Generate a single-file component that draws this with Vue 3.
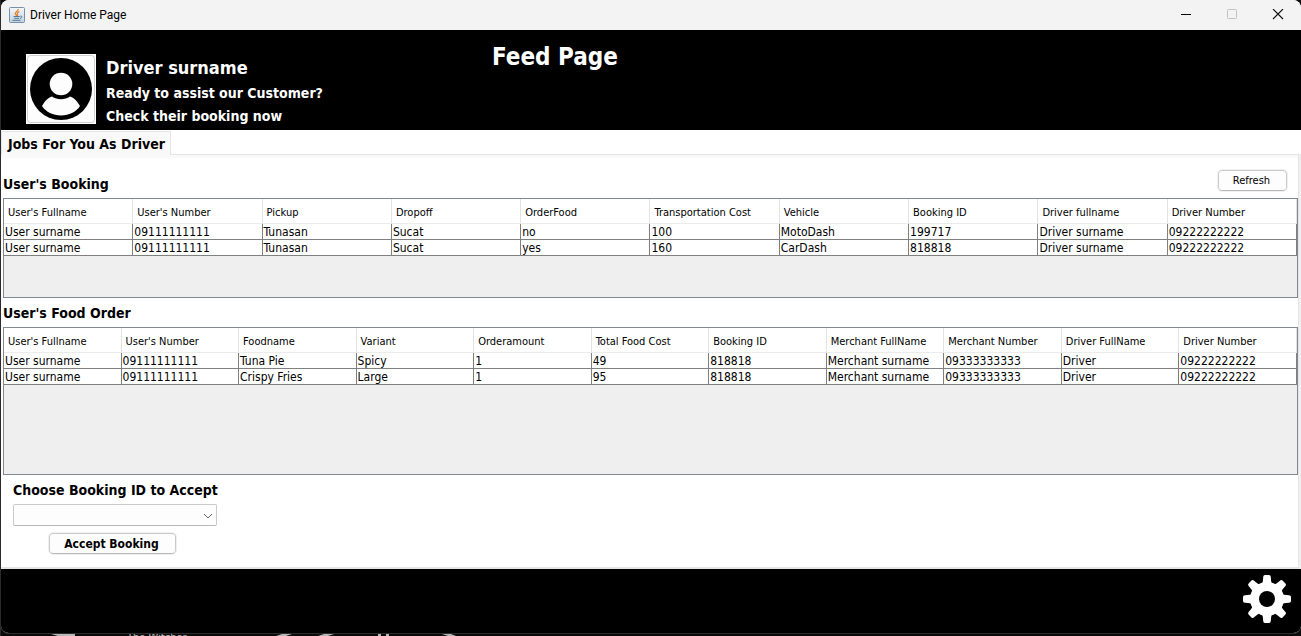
<script setup>
import { ref } from 'vue'

const selectedBooking = ref('')

const bookingColumns = [
  "User's Fullname", "User's Number", 'Pickup', 'Dropoff', 'OrderFood',
  'Transportation Cost', 'Vehicle', 'Booking ID', 'Driver fullname', 'Driver Number',
]
const bookings = [
  ['User surname', '09111111111', 'Tunasan', 'Sucat', 'no', '100', 'MotoDash', '199717', 'Driver surname', '09222222222'],
  ['User surname', '09111111111', 'Tunasan', 'Sucat', 'yes', '160', 'CarDash', '818818', 'Driver surname', '09222222222'],
]

const orderColumns = [
  "User's Fullname", "User's Number", 'Foodname', 'Variant', 'Orderamount', 'Total Food Cost',
  'Booking ID', 'Merchant FullName', 'Merchant Number', 'Driver FullName', 'Driver Number',
]
const orders = [
  ['User surname', '09111111111', 'Tuna Pie', 'Spicy', '1', '49', '818818', 'Merchant surname', '09333333333', 'Driver', '09222222222'],
  ['User surname', '09111111111', 'Crispy Fries', 'Large', '1', '95', '818818', 'Merchant surname', '09333333333', 'Driver', '09222222222'],
]
const teeth = [0, 45, 90, 135, 180, 225, 270, 315]
</script>

<template>
  <div class="desktop">
    <div class="window">
      <header class="titlebar">
        <svg class="java" viewBox="0 0 16 16" aria-hidden="true">
          <defs>
            <linearGradient id="java-bg" x1="0" y1="0" x2="0" y2="1">
              <stop offset="0" stop-color="#f4f7fa" />
              <stop offset="1" stop-color="#c3d2df" />
            </linearGradient>
          </defs>
          <rect x="0.5" y="0.5" width="15" height="15" rx="1" fill="url(#java-bg)" stroke="#7590a8" />
          <path d="M9.200 2C9.600 4 6 4.800 6.300 6.500C6.500 7.500 7.600 8 7.700 9M10.500 4.500C8.600 5.300 7.900 6.200 8.500 7.100C8.900 7.800 8.600 8.300 8.200 8.900" fill="none" stroke="#e8802a" stroke-width="1.300" />
          <path d="M4.500 9.500H10.800M5.200 11.300H10.200M3.500 13.300H11.500M11.300 9C13.500 8.800 13.300 10.900 11 11.400" fill="none" stroke="#4f7899" stroke-width="1" />
        </svg>
        <span class="caption">Driver Home Page</span>
        <div class="controls">
          <button type="button" aria-label="Minimize">
            <svg viewBox="0 0 12 12"><path d="M1 5.500H11" stroke="#000" /></svg>
          </button>
          <button type="button" aria-label="Maximize" disabled>
            <svg viewBox="0 0 12 12"><rect x="1.500" y="0.500" width="9" height="9" rx="1" fill="none" stroke="#c2c2c2" /></svg>
          </button>
          <button type="button" aria-label="Close">
            <svg viewBox="0 0 12 12"><path d="M1 0L11 10M11 0L1 10" stroke="#111" stroke-width="1.100" /></svg>
          </button>
        </div>
      </header>

      <section class="banner">
        <button type="button" class="avatar" aria-label="Profile">
          <svg viewBox="0 0 70 70">
            <rect width="70" height="70" fill="#fff" />
            <rect x="1.500" y="1.500" width="67" height="67" rx="3" fill="#fdfdfd" stroke="#cfcfcf" />
            <circle cx="35" cy="35" r="31" fill="#000" />
            <circle cx="35" cy="30" r="11.300" fill="#fdfdfd" />
            <path d="M16 52C19 47 22 43.500 26 42.500C31 46 39 46 44 42.500C48 43.500 51 47 54 52C50 58 43 61.500 35 61.500C27 61.500 20 58 16 52Z" fill="#fdfdfd" />
          </svg>
        </button>
        <div class="greeting">
          <h2>Driver surname</h2>
          <p>Ready to assist our Customer?</p>
          <p>Check their booking now</p>
        </div>
        <h1>Feed Page</h1>
      </section>

      <nav class="tabs" role="tablist">
        <button type="button" class="tab" role="tab" aria-selected="true">Jobs For You As Driver</button>
      </nav>

      <main class="panel">
        <div class="head">
          <h3 id="booking-title">User's Booking</h3>
          <button type="button" class="push refresh">Refresh</button>
        </div>
        <div class="scroll bookings">
          <table aria-labelledby="booking-title">
            <thead>
              <tr><th v-for="c in bookingColumns" :key="c" scope="col">{{ c }}</th></tr>
            </thead>
            <tbody>
              <tr v-for="(row, r) in bookings" :key="r">
                <td v-for="(cell, i) in row" :key="i">{{ cell }}</td>
              </tr>
            </tbody>
          </table>
        </div>

        <h3 id="order-title" class="order-title">User's Food Order</h3>
        <div class="scroll orders">
          <table aria-labelledby="order-title">
            <thead>
              <tr><th v-for="c in orderColumns" :key="c" scope="col">{{ c }}</th></tr>
            </thead>
            <tbody>
              <tr v-for="(row, r) in orders" :key="r">
                <td v-for="(cell, i) in row" :key="i">{{ cell }}</td>
              </tr>
            </tbody>
          </table>
        </div>

        <form class="accept" @submit.prevent>
          <label for="booking-id">Choose Booking ID to Accept</label>
          <div class="combo">
            <select id="booking-id" v-model="selectedBooking">
              <option value=""></option>
              <option>199717</option>
              <option>818818</option>
            </select>
            <svg viewBox="0 0 10 6" aria-hidden="true"><path d="M1 1L5 5L9 1" fill="none" stroke="#666" /></svg>
          </div>
          <button type="submit" class="push accept-button">Accept Booking</button>
        </form>
      </main>

      <footer class="bottom">
        <button type="button" class="gear" aria-label="Settings">
          <svg viewBox="0 0 48 48">
            <g fill="#fff">
              <path v-for="a in teeth" :key="a" :transform="`rotate(${a} 24 24)`" d="M18.500 9.500Q20 8 20.200 2Q20.300 0 22 0H26Q27.700 0 27.800 2Q28 8 29.500 9.500V15H18.500Z" />
              <circle cx="24" cy="24" r="17" />
            </g>
            <circle cx="24" cy="24" r="8" fill="#000" />
          </svg>
        </button>
      </footer>
    </div>

    <div class="behind">
      <span>The Witcher</span>
      <svg viewBox="0 0 500 2" aria-hidden="true">
        <path d="M50 0H74V2H57ZM275 2L281 0H291L285 2ZM317 2L323 0H333L327 2ZM377 0H380V2H377ZM385 0H388V2H385ZM441 0H450L455 2H447Z" fill="#b8b8b8" />
      </svg>
    </div>
  </div>
</template>

<style>
body {
  margin: 0;
  background: #000;
}
</style>

<style scoped>
* {
  box-sizing: border-box;
}

.desktop {
  display: flex;
  flex-direction: column;
  min-height: 100vh;
  padding-left: 1px;
  background: linear-gradient(90deg, #2c2a2e 1px, #0b0b0b 1px);
  color: #000;
  font: 12px/16px "DejaVu Sans Condensed", "Noto Sans", sans-serif;
}

button,
select {
  margin: 0;
  padding: 0;
  border: 0;
  background: none;
  color: inherit;
  font: inherit;
}

h1,
h2,
h3,
p {
  margin: 0;
}

svg {
  display: block;
}

.window {
  display: flex;
  flex: 1;
  flex-direction: column;
  overflow: hidden;
  border-bottom: 1px solid #2e2a2c;
  border-radius: 8px;
  background: #fff;
}

.titlebar {
  display: flex;
  align-items: center;
  height: 30px;
  padding-left: 8px;
  background: #f3f3f3;
}

.java {
  width: 16px;
  height: 16px;
}

.caption {
  margin-left: 5px;
  font-family: Roboto, "Noto Sans", sans-serif;
}

.controls {
  display: flex;
  height: 100%;
  margin-left: auto;
}

.controls button {
  display: grid;
  place-items: center;
  width: 46px;
}

.controls svg {
  width: 12px;
  height: 12px;
}

.banner {
  display: flex;
  height: 100px;
  padding: 24px 25px 0;
  background: #000;
  color: #fff;
}

.avatar,
.avatar svg {
  width: 70px;
  height: 70px;
}

.greeting {
  width: 376px;
  padding-left: 10px;
}

.greeting h2 {
  font-size: 18px;
  line-height: 28px;
}

.greeting p {
  font-size: 14px;
  font-weight: bold;
  line-height: 23px;
}

h1 {
  margin-top: -13px;
  padding-left: 20px;
  font-size: 24px;
  line-height: 32px;
}

.tabs {
  display: flex;
  height: 24px;
  padding-top: 1px;
}

.tab {
  position: relative;
  height: 24px;
  padding: 0 5px 0 6px;
  border: 1px solid #e5e5e5;
  border-bottom: 0;
  background: #f9f9f9;
  font-size: 14px;
  font-weight: bold;
  white-space: nowrap;
}

.panel {
  flex: 1;
  margin-right: 2px;
  padding-left: 2px;
  border: solid #e5e5e5;
  border-width: 1px 1px 2px 0;
  box-shadow: inset 0 3px #f9f9f9, 2px 0 #f0f0f0;
}

.head {
  display: flex;
  align-items: flex-end;
  justify-content: space-between;
  height: 43px;
  padding: 0 11px 5px 0;
}

h3,
label {
  font-size: 14px;
  font-weight: bold;
  line-height: 18px;
}

.push {
  padding-top: 1px;
  border: 1px solid #cacaca;
  border-bottom-color: #b8b8b8;
  border-radius: 4px;
  outline: 1px solid #f0f0f0;
  background: #fdfdfd;
}

.refresh {
  width: 69px;
  height: 21px;
  margin-bottom: 2px;
  padding-right: 2px;
  font-size: 11px;
}

.scroll {
  overflow: hidden;
  border: 1px solid #828790;
  background: #efefef;
}

.bookings {
  height: 100px;
}

.orders {
  height: 148px;
}

table {
  width: 100%;
  border-spacing: 0;
  table-layout: fixed;
  background: #fff;
}

th,
td {
  overflow: hidden;
  text-align: left;
  white-space: nowrap;
}

th {
  height: 25px;
  padding: 3px 0 0 4px;
  border-right: 1px solid #e3e3e3;
  border-bottom: 1px solid #ebebeb;
  font-size: 11px;
  font-weight: normal;
}

td {
  height: 16px;
  padding: 1px 0 0 1px;
  border-right: 1px solid #808080;
  border-bottom: 1px solid #808080;
  line-height: 14px;
}

.order-title {
  margin: 6px 0 5px;
}

.accept {
  display: flex;
  flex-direction: column;
  align-items: center;
  width: 204px;
  margin: 6px 0 13px 10px;
}

label {
  align-self: flex-start;
  white-space: nowrap;
}

.combo {
  display: grid;
  align-items: center;
  width: 100%;
  margin-top: 5px;
}

.combo > * {
  grid-area: 1 / 1;
}

select {
  width: 100%;
  height: 22px;
  padding: 0 20px 0 4px;
  border: 1px solid #cacaca;
  border-bottom-color: #b8b8b8;
  border-radius: 2px;
  background: #fdfdfd;
  appearance: none;
}

.combo svg {
  justify-self: end;
  width: 10px;
  height: 6px;
  margin: 2px 4px 0 0;
  pointer-events: none;
}

.accept-button {
  width: 127px;
  height: 21px;
  margin: 7px 5px 0 0;
  padding-right: 2px;
  font-weight: bold;
}

.bottom {
  display: flex;
  align-items: flex-start;
  justify-content: flex-end;
  height: 64px;
  padding: 6px 10px 0;
  background: #000;
}

.gear,
.gear svg {
  width: 48px;
  height: 48px;
}

.behind {
  display: flex;
  position: relative;
  height: 2px;
  overflow: hidden;
}

.behind span {
  padding-left: 126px;
  color: #bbb;
  font-size: 11px;
  line-height: 8px;
}

.behind svg {
  position: absolute;
  left: 0;
  width: 500px;
  height: 2px;
}
</style>
